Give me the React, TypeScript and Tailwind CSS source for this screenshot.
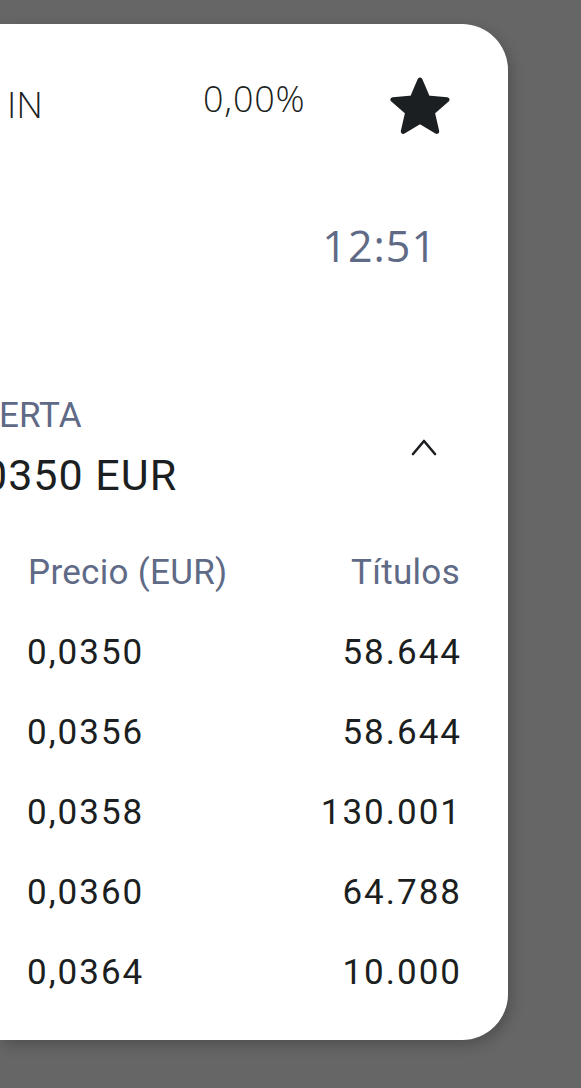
import React from "react";

const rows = [
  ["0,0350", "58.644"],
  ["0,0356", "58.644"],
  ["0,0358", "130.001"],
  ["0,0360", "64.788"],
  ["0,0364", "10.000"],
];

function Star() {
  return (
    <svg width="60" height="58" viewBox="0 0 60 58" className="block">
      <polygon
        points="30,3 37.64,20.88 57.01,22.62 42.36,35.42 46.69,54.38 30,44.4 13.31,54.38 17.64,35.42 2.99,22.62 22.36,20.88"
        fill="#1c1f21"
        stroke="#1c1f21"
        strokeWidth="5"
        strokeLinejoin="round"
      />
    </svg>
  );
}

function Chevron() {
  return (
    <svg width="26" height="18" viewBox="0 0 26 18" className="block">
      <polyline
        points="2,16 13,3 24,16"
        fill="none"
        stroke="#1c1f21"
        strokeWidth="2.6"
        strokeLinecap="round"
        strokeLinejoin="round"
      />
    </svg>
  );
}

export default function App() {
  return (
    <div className="w-[581px] h-[1088px] bg-[#666666] overflow-hidden pt-[24px]">
      <div className="w-[508px] h-[1016px] bg-white rounded-r-[46px] shadow-[3px_5px_14px_rgba(0,0,0,0.22)] overflow-hidden flex flex-col">
        {/* Row 1 */}
        <div className="h-[130px] flex items-start shrink-0">
          <div className="w-[200px] pl-[7px] mt-[61px] font-['Open_Sans',sans-serif] font-light text-[37px] leading-none text-[#1c1f21]">
            IN
          </div>
          <div className="w-[188px] pl-[3px] mt-[57px] font-['Open_Sans',sans-serif] font-light text-[36px] tracking-[0.8px] leading-none text-[#1c1f21]">
            0,00%
          </div>
          <div className="mt-[53px] ml-[2px]">
            <Star />
          </div>
        </div>

        {/* Time */}
        <div className="mt-[70px] pr-[71px] text-right font-['Open_Sans',sans-serif] text-[43px] tracking-[1px] leading-none text-[#5f6a86]">
          12:51
        </div>

        {/* Best offer section */}
        <div className="mt-[131px] flex justify-between">
          <div className="flex flex-col font-['Roboto',sans-serif]">
            <div className="text-[35px] leading-none text-[#5f6a86] -ml-[1px]">ERTA</div>
            <div className="mt-[21px] text-[43px] tracking-[1px] leading-none text-[#1c1f21] -ml-[17px] whitespace-nowrap">
              0350 EUR
            </div>
          </div>
          <div className="mt-[40px] mr-[71px]">
            <Chevron />
          </div>
        </div>

        {/* Table */}
        <div className="mt-[36px] flex flex-col font-['Roboto',sans-serif] text-[35px]">
          <div className="h-[80px] leading-[80px] flex justify-between pl-[28px] pr-[48px] text-[#5f6a86]">
            <span className="tracking-[0.3px]">Precio (EUR)</span>
            <span className="tracking-[0.3px]">Títulos</span>
          </div>
          {rows.map(([p, t]) => (
            <div
              key={p + t}
              className="h-[80px] leading-[80px] flex justify-between pl-[27px] pr-[46px] text-[#1c1f21] tracking-[2px]"
            >
              <span>{p}</span>
              <span>{t}</span>
            </div>
          ))}
        </div>
      </div>
    </div>
  );
}
